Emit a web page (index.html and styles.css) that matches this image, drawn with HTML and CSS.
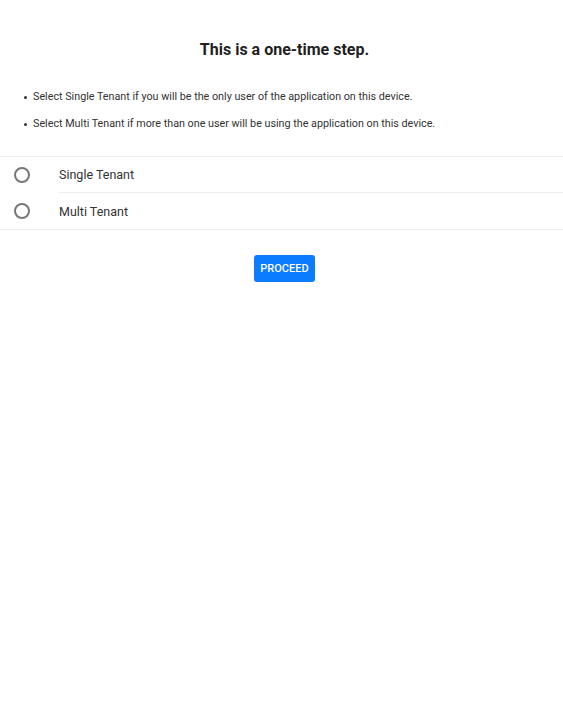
FILE: index.html
```html
<!DOCTYPE html>
<html lang="en">
<head>
    <meta charset="UTF-8">
    <meta name="viewport" content="width=device-width, initial-scale=1.0">
    <title>Tenant Selection</title>
    <link rel="stylesheet" href="styles.css">
</head>
<body>

    <div class="setup-page">
        <h2 class="setup-title">This is a one-time step.</h2>

        <!-- Help text for the two options -->
        <ul class="setup-help">
            <li>Select Single Tenant if you will be the only user of the application on this device.</li>
            <li>Select Multi Tenant if more than one user will be using the application on this device.</li>
        </ul>

        <div class="tenant-list">
            <label class="tenant-item">
                <span class="tenant-radio"></span>
                <span class="tenant-label">Single Tenant</span>
            </label>
            <label class="tenant-item">
                <span class="tenant-radio"></span>
                <span class="tenant-label">Multi Tenant</span>
            </label>
        </div>

        <div class="proceed-container">
            <button class="proceed-button" type="button">PROCEED</button>
        </div>
    </div>

</body>
</html>
```

FILE: styles.css
```css
body {
    margin: 0;
    font-family: Roboto, "Liberation Sans", sans-serif;
    color: #222428;
    background-color: #FFFFFF;
}

.setup-title {
    margin: 0;
    padding-top: 40px;
    padding-left: 6px;
    text-align: center;
    font-size: 16px;
    font-weight: 700;
    color: #1f1f1f;
}

.setup-help {
    margin: 31px 0 0 0;
    padding-left: 33px;
    padding-bottom: 12px;
    list-style: none;
    font-size: 10.75px;
    color: #333333;
}

.setup-help li {
    line-height: 13px;
    margin-bottom: 14px;
}

.setup-help li::before {
    content: "";
    display: inline-block;
    width: 3px;
    height: 3px;
    margin-left: -9px;
    margin-right: 6px;
    vertical-align: middle;
    border-radius: 50%;
    background-color: #333333;
}

.tenant-list {
    border-top: 1px solid #eeeeee;
    border-bottom: 1px solid #eeeeee;
}

.tenant-item {
    display: flex;
    align-items: center;
    height: 35px;
    cursor: pointer;
}

.tenant-item + .tenant-item {
    height: 37px;
}

.tenant-radio {
    flex: none;
    width: 12px;
    height: 12px;
    margin-left: 14px;
    margin-right: 29px;
    border: 2px solid #777777;
    border-radius: 50%;
}

.tenant-label {
    flex: 1;
    align-self: stretch;
    display: flex;
    align-items: center;
    font-size: 12.5px;
    color: #333333;
}

.tenant-item + .tenant-item .tenant-label {
    border-top: 1px solid #eeeeee;
}

.proceed-container {
    text-align: center;
    padding-top: 25px;
    padding-left: 6px;
}

.proceed-button {
    height: 27px;
    padding: 0 6px;
    border: none;
    border-radius: 3px;
    background-color: #0a7cff;
    color: #FFFFFF;
    font-family: Roboto, "Liberation Sans", sans-serif;
    font-size: 11px;
    font-weight: 500;
    letter-spacing: 0.05px;
    cursor: pointer;
}
```
